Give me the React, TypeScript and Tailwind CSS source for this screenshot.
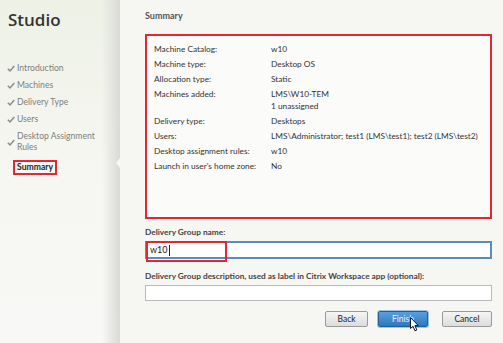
import React from "react";

const font = { fontFamily: 'Lato, "Open Sans", "Liberation Sans", sans-serif' };

function Check() {
  return (
    <svg width="8" height="7" viewBox="0 0 8 7" className="shrink-0">
      <path d="M0.8 3.8 L3 5.9 L7.3 0.9" fill="none" stroke="#8a8d8a" strokeWidth="1.5" />
    </svg>
  );
}

const rows: [string, string[]][] = [
  ["Machine Catalog:", ["w10"]],
  ["Machine type:", ["Desktop OS"]],
  ["Allocation type:", ["Static"]],
  ["Machines added:", ["LMS\\W10-TEM", "1 unassigned"]],
  ["Delivery type:", ["Desktops"]],
  ["Users:", ["LMS\\Administrator; test1 (LMS\\test1); test2 (LMS\\test2)"]],
  ["Desktop assignment rules:", ["w10"]],
  ["Launch in user's home zone:", ["No"]],
];

export default function App() {
  return (
    <div
      className="w-[503px] h-[343px] flex overflow-hidden bg-[#f6f7f2] text-[#333]"
      style={font}
    >
      {/* Sidebar */}
      <div className="relative w-[120px] shrink-0 bg-gradient-to-b from-[#eef1e6] via-[#f6f7f2] to-[#f8f8f6]">
        <div className="absolute right-0 top-0 bottom-0 w-[18px] bg-gradient-to-r from-transparent to-[#d9dad7]" />
        <div className="relative pl-[8px] pt-[9px] text-[17px] leading-[22px] font-semibold text-[#333]" style={{ fontFamily: '"Open Sans", sans-serif' }}>
          Studio
        </div>
        <div className="relative mt-[32px] flex flex-col gap-[6px] text-[8.6px] leading-[11px] text-[#7d7f7d]">
          {["Introduction", "Machines", "Delivery Type", "Users"].map((s) => (
            <div key={s} className="flex items-center gap-[2px] pl-[7px]">
              <Check />
              <span className="whitespace-nowrap">{s}</span>
            </div>
          ))}
          <div className="flex items-center gap-[2px] pl-[7px]">
            <Check />
            <div className="flex flex-col whitespace-nowrap">
              <span>Desktop Assignment</span>
              <span>Rules</span>
            </div>
          </div>
          <div className="pl-[13px] mt-[1px]">
            <div className="inline-block border-2 border-[#e3262f] px-[2px] leading-[11px] font-bold text-[#222]">
              Summary
            </div>
          </div>
        </div>
        {/* notch */}
        <div className="absolute right-0 top-[158px] w-0 h-0 border-y-[5px] border-y-transparent border-r-[4px] border-r-[#f7f8f4]" />
      </div>

      {/* Main */}
      <div className="relative flex-1 min-w-0 pl-[25px] pr-[11px]">
        <div className="pt-[9px] text-[9px] leading-[13px] font-bold text-[#555]">Summary</div>
        <div className="mt-[12px] h-[185px] border-2 border-[#e3262f] bg-[#fbfbfa] pl-[7px] pt-[7px]">
          <div className="grid grid-cols-[117px_1fr] gap-y-[3px] text-[8.3px] leading-[12px] text-[#333]">
            {rows.map(([k, v]) => (
              <React.Fragment key={k}>
                <div className="whitespace-nowrap">{k}</div>
                <div className="min-w-0">
                  {v.map((t) => (
                    <div key={t} className="whitespace-nowrap">{t}</div>
                  ))}
                </div>
              </React.Fragment>
            ))}
          </div>
        </div>

        <div className="mt-[7px] text-[8.3px] leading-[12px] font-bold text-[#444]">
          Delivery Group name:
        </div>
        <div className="relative mt-[3px] h-[18px] border-2 border-[#5a8dbd] bg-white flex items-center pl-[3px] text-[9px] text-[#222]">
          w10<span className="inline-block w-px h-[11px] bg-[#222] ml-[1px]" />
          <div className="absolute -left-[1px] -top-[2px] w-[81px] h-[21px] border-2 border-[#e3262f]" />
        </div>

        <div className="mt-[11px] text-[8.3px] leading-[12px] font-bold text-[#444] whitespace-nowrap">
          Delivery Group description, used as label in Citrix Workspace app (optional):
        </div>
        <div className="mt-[3px] h-[16px] border border-[#b9bbbb] bg-white" />

        <div className="mt-[10px] flex justify-end gap-[11px] pr-0">
          <button className="w-[43px] h-[16px] border border-[#9a9a9a] rounded-[2px] bg-gradient-to-b from-[#f6f6f6] to-[#dcdcdc] text-[8.5px] leading-[14px] text-[#222]">
            Back
          </button>
          <button className="relative w-[50px] h-[16px] -ml-[1px] mr-[3px] border border-[#1f5f9a] rounded-[2px] bg-gradient-to-b from-[#5aa0dd] to-[#2f78be] text-[8.5px] leading-[14px] text-[#e8f1fa] shadow-[0_0_0_1px_#9cc3e6]">
            Finish
            <svg width="10" height="15" viewBox="0 0 10 15" className="absolute left-[31px] top-[5px]">
              <path d="M0.5 0.5 L0.5 11.5 L3 9.3 L5 13.8 L6.8 13 L4.9 8.6 L8.3 8.6 Z" fill="#fff" stroke="#000" strokeWidth="0.9" strokeLinejoin="round" />
            </svg>
          </button>
          <button className="w-[50px] h-[16px] border border-[#9a9a9a] rounded-[2px] bg-gradient-to-b from-[#f6f6f6] to-[#dcdcdc] text-[8.5px] leading-[14px] text-[#222]">
            Cancel
          </button>
        </div>
      </div>
    </div>
  );
}
